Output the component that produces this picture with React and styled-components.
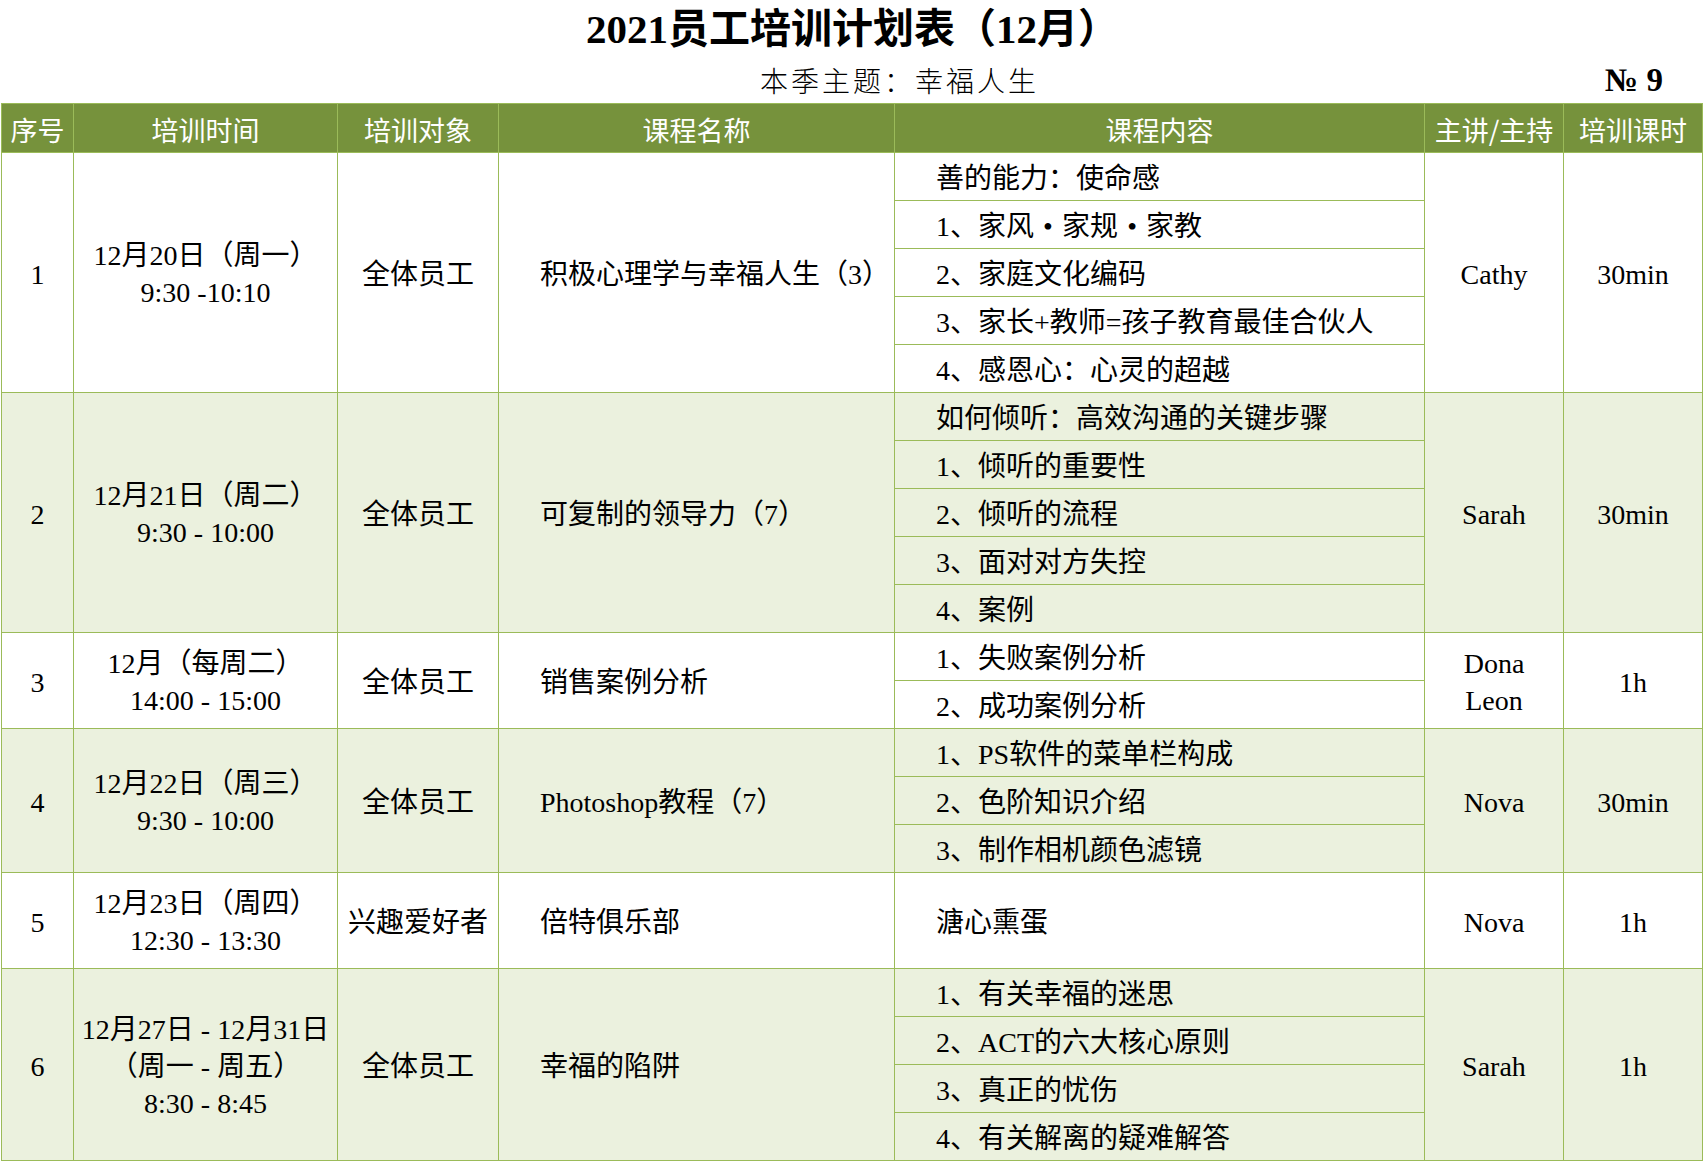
import React from 'react';
import styled, { createGlobalStyle } from 'styled-components';

const GlobalStyle = createGlobalStyle`
  html, body {
    margin: 0;
    padding: 0;
    background: #FFFFFF;
  }
  body {
    font-family: "Liberation Serif", "Noto Sans CJK SC", serif;
    color: #000000;
  }
`;

const GREEN = '#76923C';
const LINE = '#9BBB59';
const BAND = '#EBF1DE';

const Page = styled.div`
  width: 1703px;
  min-height: 1161px;
  display: flex;
  flex-direction: column;
`;

const TitleBar = styled.h1`
  margin: 0;
  height: 58px;
  padding-left: 2px;
  display: flex;
  align-items: center;
  justify-content: center;
  font-family: "Liberation Serif", "Noto Sans CJK SC", serif;
  font-size: 41px;
  font-weight: 700;
  line-height: 58px;
`;

const SubBar = styled.div`
  height: 45px;
  display: grid;
  grid-template-columns: 1fr auto 1fr;
  align-items: center;
`;

const Theme = styled.div`
  grid-column: 2;
  padding-left: 96px;
  font-family: "Noto Sans CJK SC", sans-serif;
  font-size: 28px;
  font-weight: 300;
  letter-spacing: 3px;
  line-height: 45px;
`;

const Serial = styled.div`
  grid-column: 3;
  justify-self: end;
  padding-right: 40px;
  font-family: "Liberation Serif", "DejaVu Serif", serif;
  font-size: 33px;
  font-weight: 700;
`;

const Table = styled.table`
  width: 1701px;
  margin-left: 1px;
  border-collapse: collapse;
  table-layout: fixed;
`;

const HeadCell = styled.th`
  height: 45px;
  padding: 3px 0 0;
  background: ${GREEN};
  border: 1px solid ${LINE};
  color: #FFFFFF;
  font-family: "Noto Sans CJK SC", sans-serif;
  font-size: 27px;
  font-weight: 400;
  text-align: center;
  white-space: nowrap;
`;

const Row = styled.tr`
  height: ${(p) => p.$h || 48}px;
  background: ${(p) => (p.$band ? BAND : '#FFFFFF')};
`;

const Cell = styled.td`
  padding: 3px 0 0 ${(p) => (p.$left ? '41px' : '0')};
  border: 1px solid ${LINE};
  font-size: 28px;
  line-height: 37px;
  text-align: ${(p) => (p.$left ? 'left' : 'center')};
  vertical-align: middle;
  white-space: nowrap;
`;

const Line = styled.div`
  line-height: 37px;
`;

const Dot = styled.span`
  display: inline-block;
  width: 1em;
  text-align: center;
  font-family: "Liberation Serif", serif;
`;

const columns = [
  { label: '序号', width: 72 },
  { label: '培训时间', width: 264 },
  { label: '培训对象', width: 161 },
  { label: '课程名称', width: 396 },
  { label: '课程内容', width: 530 },
  { label: '主讲/主持', width: 139 },
  { label: '培训课时', width: 139 },
];

const sessions = [
  {
    no: '1',
    time: ['12月20日（周一）', '9:30 -10:10'],
    target: '全体员工',
    course: '积极心理学与幸福人生（3）',
    items: [
      '善的能力：使命感',
      <>1、家风<Dot>•</Dot>家规<Dot>•</Dot>家教</>,
      '2、家庭文化编码',
      '3、家长+教师=孩子教育最佳合伙人',
      '4、感恩心：心灵的超越',
    ],
    host: ['Cathy'],
    hours: '30min',
  },
  {
    no: '2',
    time: ['12月21日（周二）', '9:30 - 10:00'],
    target: '全体员工',
    course: '可复制的领导力（7）',
    items: ['如何倾听：高效沟通的关键步骤', '1、倾听的重要性', '2、倾听的流程', '3、面对对方失控', '4、案例'],
    host: ['Sarah'],
    hours: '30min',
  },
  {
    no: '3',
    time: ['12月（每周二）', '14:00 - 15:00'],
    target: '全体员工',
    course: '销售案例分析',
    items: ['1、失败案例分析', '2、成功案例分析'],
    host: ['Dona', 'Leon'],
    hours: '1h',
  },
  {
    no: '4',
    time: ['12月22日（周三）', '9:30 - 10:00'],
    target: '全体员工',
    course: 'Photoshop教程（7）',
    items: ['1、PS软件的菜单栏构成', '2、色阶知识介绍', '3、制作相机颜色滤镜'],
    host: ['Nova'],
    hours: '30min',
  },
  {
    no: '5',
    time: ['12月23日（周四）', '12:30 - 13:30'],
    target: '兴趣爱好者',
    course: '倍特俱乐部',
    items: ['溏心熏蛋'],
    itemHeight: 96,
    host: ['Nova'],
    hours: '1h',
  },
  {
    no: '6',
    time: ['12月27日 - 12月31日', '（周一 - 周五）', '8:30 - 8:45'],
    target: '全体员工',
    course: '幸福的陷阱',
    items: ['1、有关幸福的迷思', '2、ACT的六大核心原则', '3、真正的忧伤', '4、有关解离的疑难解答'],
    host: ['Sarah'],
    hours: '1h',
  },
];

function Lines({ lines }) {
  return lines.map((l) => <Line key={l}>{l}</Line>);
}

function SessionRows({ session, band }) {
  const span = session.items.length;
  return session.items.map((item, i) => (
    <Row key={i} $band={band} $h={session.itemHeight}>
      {i === 0 && (
        <>
          <Cell rowSpan={span}>{session.no}</Cell>
          <Cell rowSpan={span}>
            <Lines lines={session.time} />
          </Cell>
          <Cell rowSpan={span}>{session.target}</Cell>
          <Cell rowSpan={span} $left>{session.course}</Cell>
        </>
      )}
      <Cell $left>{item}</Cell>
      {i === 0 && (
        <>
          <Cell rowSpan={span}>
            <Lines lines={session.host} />
          </Cell>
          <Cell rowSpan={span}>{session.hours}</Cell>
        </>
      )}
    </Row>
  ));
}

export default function App() {
  return (
    <Page>
      <GlobalStyle />
      <TitleBar>2021员工培训计划表（12月）</TitleBar>
      <SubBar>
        <Theme>本季主题：幸福人生</Theme>
        <Serial>№ 9</Serial>
      </SubBar>
      <Table>
        <colgroup>
          {columns.map((c) => (
            <col key={c.label} style={{ width: c.width }} />
          ))}
        </colgroup>
        <thead>
          <tr>
            {columns.map((c) => (
              <HeadCell key={c.label}>{c.label}</HeadCell>
            ))}
          </tr>
        </thead>
        <tbody>
          {sessions.map((s, i) => (
            <SessionRows key={s.no} session={s} band={i % 2 === 1} />
          ))}
        </tbody>
      </Table>
    </Page>
  );
}
